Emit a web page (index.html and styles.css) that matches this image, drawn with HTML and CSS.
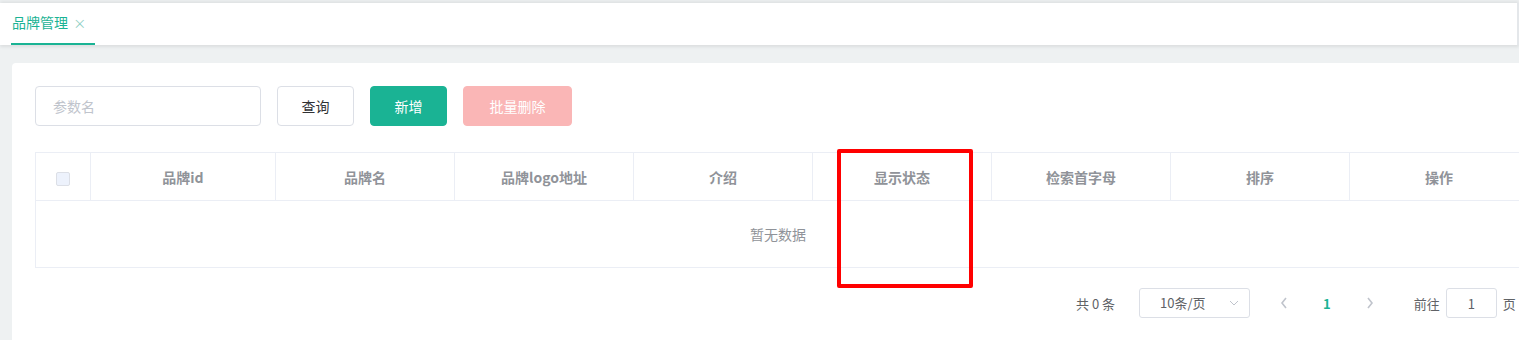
FILE: index.html
```html
<!DOCTYPE html>
<html lang="zh">
  <head>
    <meta charset="UTF-8" />
    <title>品牌管理</title>
    <link rel="stylesheet" href="styles.css">
  </head>
  <body>
    <div class="tabs">
      <div class="tab active">品牌管理 <span class="tab-close">×</span></div>
    </div>

    <div class="main">
      <div class="card">
        <div class="toolbar">
          <input class="input" type="text" placeholder="参数名">
          <button class="btn">查询</button>
          <button class="btn btn-primary">新增</button>
          <button class="btn btn-danger" disabled>批量删除</button>
        </div>

        <div class="table-wrap">
          <table class="table">
            <colgroup>
              <col style="width: 55px">
              <col style="width: 185px">
              <col style="width: 179px">
              <col style="width: 179px">
              <col style="width: 179px">
              <col style="width: 179px">
              <col style="width: 179px">
              <col style="width: 179px">
              <col style="width: 179px">
            </colgroup>
            <thead>
              <tr>
                <th><span class="checkbox"></span></th>
                <th>品牌id</th>
                <th>品牌名</th>
                <th>品牌logo地址</th>
                <th>介绍</th>
                <th>显示状态</th>
                <th>检索首字母</th>
                <th>排序</th>
                <th>操作</th>
              </tr>
            </thead>
            <tbody>
              <tr>
                <td class="empty" colspan="9">暂无数据</td>
              </tr>
            </tbody>
          </table>
          <div class="mark"></div>
        </div>

        <div class="pager">
          <span class="total">共 0 条</span>
          <div class="select">10条/页
            <svg class="arrow-down" width="10" height="6" viewBox="0 0 10 6"><path d="M1 1l4 4 4-4" fill="none" stroke="#c0c4cc" stroke-width="1"/></svg>
          </div>
          <svg class="nav" width="8" height="12" viewBox="0 0 8 12"><path d="M6 1L2 6l4 5" fill="none" stroke="#c0c4cc" stroke-width="1.6"/></svg>
          <span class="page-num">1</span>
          <svg class="nav" width="8" height="12" viewBox="0 0 8 12"><path d="M2 1l4 5-4 5" fill="none" stroke="#c0c4cc" stroke-width="1.6"/></svg>
          <span class="goto">前往</span>
          <input class="page-input" type="text" value="1">
          <span class="goto-end">页</span>
        </div>
      </div>
    </div>
  </body>
</html>
```

FILE: styles.css
```css
* {
  margin: 0;
  padding: 0;
  box-sizing: border-box;
}

body {
  width: 1519px;
  height: 340px;
  overflow: hidden;
  background-color: #eef1f2;
  font-family: "Noto Sans CJK SC", "Liberation Sans", sans-serif;
  font-size: 14px;
  color: #606266;
}

.tabs {
  height: 42px;
  margin-top: 3px;
  background-color: #fff;
  border-right: 2px solid #e4e7ea;
  box-shadow: 0 -2px 3px rgba(0, 0, 0, 0.06), 0 2px 3px rgba(0, 0, 0, 0.08);
  padding-left: 11px;
  display: flex;
  align-items: flex-end;
}

.tab {
  height: 42px;
  width: 84px;
  padding-left: 1px;
  color: #1ab394;
  font-size: 14px;
  line-height: 38px;
  border-bottom: 2px solid #1ab394;
}

.tab-close {
  font-size: 13px;
  color: #8fcfc4;
  margin-left: 2px;
}

.main {
  padding: 18px 0 0 12px;
}

.card {
  background-color: #fff;
  border-top-left-radius: 4px;
  padding: 23px 0 0 23px;
  height: 277px;
}

.toolbar {
  display: flex;
  align-items: center;
  height: 40px;
}

.input {
  width: 226px;
  height: 40px;
  border: 1px solid #dcdfe6;
  border-radius: 4px;
  padding-left: 17px;
  font-family: inherit;
  font-size: 14px;
  outline: none;
}

.input::placeholder {
  color: #c0c4cc;
}

.btn {
  height: 40px;
  width: 77px;
  border: 1px solid #dcdfe6;
  border-radius: 4px;
  background-color: #fff;
  font-family: inherit;
  font-size: 14px;
  line-height: 36px;
  color: #303133;
  margin-left: 16px;
}

.btn-primary {
  background-color: #1ab394;
  border-color: #1ab394;
  color: #fff;
}

.btn-danger {
  width: 109px;
  background-color: #fab6b6;
  border-color: #fab6b6;
  color: #fff;
}

.table-wrap {
  position: relative;
  margin-top: 26px;
}

.table {
  border-collapse: collapse;
  table-layout: fixed;
  width: 1493px;
  border: 1px solid #ebeef5;
}

.table th {
  height: 48px;
  border: 1px solid #ebeef5;
  color: #909399;
  font-weight: bold;
  text-align: center;
  font-size: 14px;
}

.checkbox {
  display: inline-block;
  width: 14px;
  height: 14px;
  border: 1px solid #dcdfe6;
  border-radius: 2px;
  background-color: #edf2fc;
  vertical-align: middle;
}

.empty {
  height: 67px;
  text-align: center;
  color: #909399;
  padding-right: 8px;
}

.mark {
  position: absolute;
  left: 802px;
  top: -3px;
  width: 136px;
  height: 139px;
  border: 4px solid #ff0000;
  border-radius: 2px;
}

.pager {
  display: flex;
  align-items: center;
  height: 30px;
  margin-top: 20px;
  padding-left: 1041px;
  font-size: 13px;
}

.total {
  margin-right: 24px;
}

.select {
  width: 111px;
  height: 30px;
  border: 1px solid #dcdfe6;
  border-radius: 3px;
  padding-left: 20px;
  line-height: 28px;
  display: flex;
  align-items: center;
  justify-content: space-between;
  padding-right: 10px;
  color: #606266;
}

.nav {
  margin-left: 30px;
}

.page-num {
  color: #1ab394;
  font-weight: bold;
  margin-left: 35px;
  margin-right: 5px;
}

.page-num + .nav {
  margin-left: 30px;
}

.goto {
  margin-left: 40px;
}

.page-input {
  width: 51px;
  height: 30px;
  margin-left: 6px;
  border: 1px solid #dcdfe6;
  border-radius: 3px;
  text-align: center;
  font-family: inherit;
  font-size: 13px;
  color: #606266;
}

.goto-end {
  margin-left: 6px;
}
```
